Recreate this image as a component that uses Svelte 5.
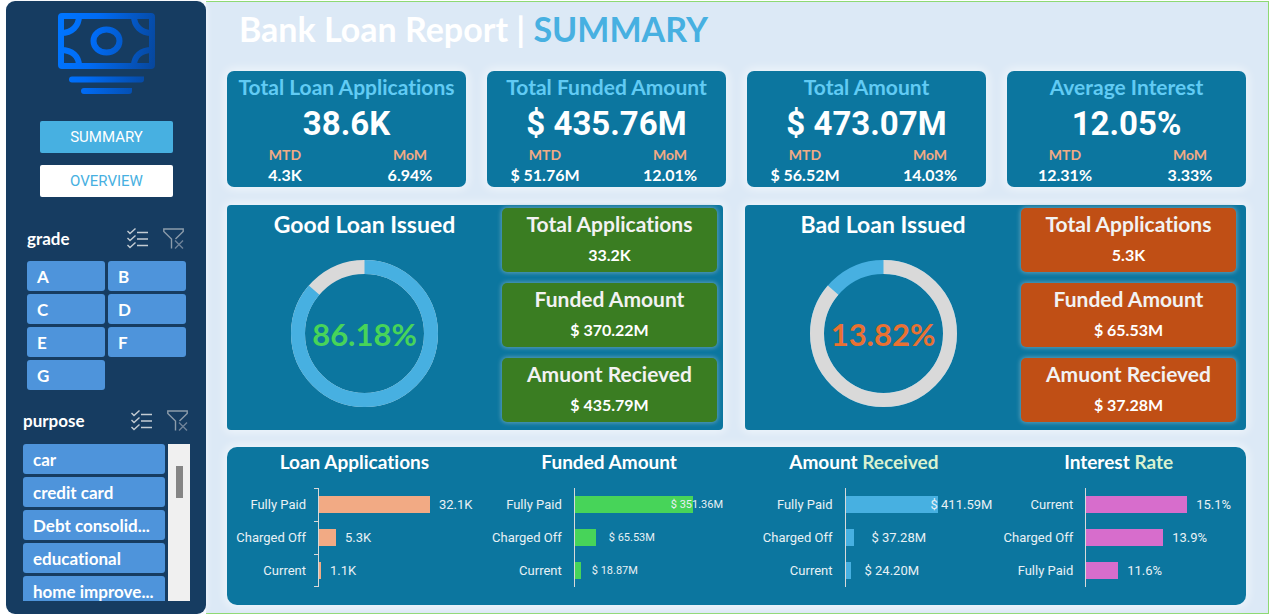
<script>
  const kpis = [
    { title: 'Total Loan Applications', value: '38.6K', mtd: '4.3K', mom: '6.94%' },
    { title: 'Total Funded Amount', value: '$ 435.76M', mtd: '$ 51.76M', mom: '12.01%' },
    { title: 'Total Amount', value: '$ 473.07M', mtd: '$ 56.52M', mom: '14.03%' },
    { title: 'Average Interest', value: '12.05%', mtd: '12.31%', mom: '3.33%' }
  ];

  const loans = [
    {
      kind: 'good', title: 'Good Loan Issued', share: '86.18%', main: '#47b0e1', rest: '#d9d9d9',
      stats: [['Total Applications', '33.2K'], ['Funded Amount', '$ 370.22M'], ['Amuont Recieved', '$ 435.79M']]
    },
    {
      kind: 'bad', title: 'Bad Loan Issued', share: '13.82%', main: '#d9d9d9', rest: '#47b0e1',
      stats: [['Total Applications', '5.3K'], ['Funded Amount', '$ 65.53M'], ['Amuont Recieved', '$ 37.28M']]
    }
  ];

  // bar: bar length, gap: distance from the bar's end to its value
  const charts = [
    {
      title: 'Loan', tail: 'Applications', color: '#f2aa84', axis: 91, ticks: true,
      rows: [
        { name: 'Fully Paid', text: '32.1K', bar: 111, gap: 9 },
        { name: 'Charged Off', text: '5.3K', bar: 17, gap: 9 },
        { name: 'Current', text: '1.1K', bar: 2, gap: 9 }
      ]
    },
    {
      title: 'Funded', tail: 'Amount', color: '#47d459', axis: 92, small: true,
      rows: [
        { name: 'Fully Paid', text: '$ 351.36M', bar: 118, gap: -22 },
        { name: 'Charged Off', text: '$ 65.53M', bar: 21, gap: 13 },
        { name: 'Current', text: '$ 18.87M', bar: 6, gap: 11 }
      ]
    },
    {
      title: 'Amount', tail: 'Received', color: '#47b0e1', axis: 108, tint: true,
      rows: [
        { name: 'Fully Paid', text: '$ 411.59M', bar: 92, gap: -7 },
        { name: 'Charged Off', text: '$ 37.28M', bar: 8, gap: 18 },
        { name: 'Current', text: '$ 24.20M', bar: 5, gap: 14 }
      ]
    },
    {
      title: 'Interest', tail: 'Rate', color: '#d76dcc', axis: 94, tint: true,
      rows: [
        { name: 'Current', text: '15.1%', bar: 101, gap: 9 },
        { name: 'Charged Off', text: '13.9%', bar: 77, gap: 9 },
        { name: 'Fully Paid', text: '11.6%', bar: 32, gap: 9 }
      ]
    }
  ];

  const grades = ['A', 'B', 'C', 'D', 'E', 'F', 'G'];
  const purposes = ['car', 'credit card', 'Debt consolid...', 'educational', 'home improve...'];

  const turn = 2 * Math.PI * 66.5;
</script>

{#snippet tools(name)}
  <div class="tools">
    <button type="button" aria-label="Multi-select {name}">
      <svg width="21" height="21" viewBox="0 0 21 21" fill="none" stroke="#c4ccd3" stroke-width="1.4">
        <path d="M.5 3 3 5.500l5.500-5M.5 10 3 12.500l5.500-5M.5 17 3 19.500l5.500-5" />
        <path d="M10 4.500h11M10 11h11M10 17.500h11" />
      </svg>
    </button>
    <button type="button" aria-label="Clear {name} filter">
      <svg width="21" height="21" viewBox="0 0 21 21" fill="none" stroke="#8c9cab" stroke-width="1.4">
        <path d="M8.500 20.500v-9.500L.8 3.500V1h19.400v2.500l-7.700 7.500" />
        <path d="M12 12.500l8 8M20 12.500l-8 8" stroke="#70849a" />
      </svg>
    </button>
  </div>
{/snippet}

<div class="page">
  <aside>
    <svg class="logo" width="98" height="82" viewBox="0 0 98 82" fill="none" stroke="url(#ink)" stroke-width="6" role="img" aria-label="Bank notes">
      <defs>
        <linearGradient id="ink" gradientUnits="userSpaceOnUse" x1="0" y1="30" x2="98" y2="50">
          <stop offset="0" stop-color="#0075ff" />
          <stop offset=".35" stop-color="#006bf5" />
          <stop offset="1" stop-color="#07479d" />
        </linearGradient>
      </defs>
      <rect x="4" y="3" width="91" height="50" rx="1" />
      <path d="M22 3c0 10-7 17-18 17M77 3c0 10 7 17 18 17M22 53c0-10-7-16-18-16M77 53c0-10 7-16 18-16" />
      <ellipse cx="49.5" cy="28" rx="13" ry="11.5" />
      <path d="M15 66.500h69v.1M27 78h45v.1" stroke-linecap="round" />
    </svg>

    <nav>
      <button type="button" class="active">SUMMARY</button>
      <button type="button">OVERVIEW</button>
    </nav>

    <section class="slicer grade">
      <header><h2>grade</h2>{@render tools('grade')}</header>
      <div class="grades">
        {#each grades as g}<button type="button" class="item">{g}</button>{/each}
      </div>
    </section>

    <section class="slicer purpose">
      <header><h2>purpose</h2>{@render tools('purpose')}</header>
      <div class="scroller">
        <div class="list">
          {#each purposes as p}<button type="button" class="item">{p}</button>{/each}
        </div>
        <div class="track"><div class="thumb"></div></div>
      </div>
    </section>
  </aside>

  <main>
    <h1>Bank Loan Report | <span>SUMMARY</span></h1>

    <section class="kpis">
      {#each kpis as k}
        <article class="kpi">
          <h2>{k.title}</h2>
          <strong>{k.value}</strong>
          <dl>
            <div><dt>MTD</dt><dd>{k.mtd}</dd></div>
            <div><dt>MoM</dt><dd>{k.mom}</dd></div>
          </dl>
        </article>
      {/each}
    </section>

    <section class="loans">
      {#each loans as l}
        <article class="loan {l.kind}">
          <div class="share">
            <h2>{l.title}</h2>
            <div class="donut">
              <svg width="147" height="147" viewBox="0 0 147 147" fill="none" stroke-width="14" aria-hidden="true">
                <circle cx="73.5" cy="73.5" r="66.5" stroke={l.rest} />
                <circle cx="73.5" cy="73.5" r="66.5" stroke={l.main} stroke-dasharray="{turn * 0.8618} {turn}" transform="rotate(-90 73.5 73.5)" />
              </svg>
              <span>{l.share}</span>
            </div>
          </div>
          <div class="stats">
            {#each l.stats as [name, value]}
              <div class="stat"><h3>{name}</h3><p>{value}</p></div>
            {/each}
          </div>
        </article>
      {/each}
    </section>

    <section class="charts">
      {#each charts as c}
        <article class="chart" class:small={c.small} class:ticks={c.ticks}>
          <h2>{c.title} <span class:tint={c.tint}>{c.tail}</span></h2>
          <ul>
            {#each c.rows as r}
              <li>
                <span class="name" style="width: {c.axis}px">{r.name}</span>
                <span class="plot">
                  <span class="bar" style="width: {r.bar}px; background: {c.color}"></span>
                  <span class="value" style="margin-left: {r.gap}px">{r.text}</span>
                </span>
              </li>
            {/each}
          </ul>
        </article>
      {/each}
    </section>
  </main>
</div>

<style>
  :global(body) { margin: 0; background: #fff; }
  .page {
    display: flex;
    box-sizing: border-box;
    min-height: 100vh;
    margin: 0 2px 0 6px;
    padding-top: 1px;
    font-family: Lato, "Liberation Sans", sans-serif;
    font-variant-ligatures: none;
    color: #fff;
  }
  h1, h2, h3, p, dl, dd, ul { margin: 0; padding: 0; }
  button { border: 0; padding: 0; font: inherit; color: inherit; cursor: pointer; }

  aside {
    flex: none;
    box-sizing: border-box;
    width: 200px;
    padding-top: 12px;
    background: #163c61;
    border-radius: 9px;
    box-shadow: 2px 0 4px #eef3fb;
    z-index: 1;
  }
  .logo { display: block; margin: 0 auto; }
  nav { display: grid; gap: 12px; margin: 26px 33px 0 34px; }
  nav button {
    height: 32px;
    border-radius: 2px;
    background: #fff;
    color: #47b0e1;
    font: 15px Roboto, sans-serif;
  }
  nav .active { background: #47b0e1; color: #fff; }

  .slicer header { display: flex; justify-content: space-between; align-items: center; height: 24px; }
  .slicer h2 { padding-top: 2px; font-size: 17px; line-height: 24px; }
  .tools { display: flex; gap: 15px; padding-right: 2px; }
  .tools button { background: none; height: 21px; }
  .tools svg { display: block; }
  .grade { margin: 29px 20px 0 21px; }
  .purpose { margin: 18px 16px 0 17px; }
  .grades { display: grid; grid-template-columns: 1fr 1fr; gap: 3px; margin-top: 11px; }
  .item {
    height: 30px;
    flex: none;
    padding: 0 10px;
    border-radius: 3px;
    background: #4e94db;
    text-align: left;
    font-size: 17px;
    font-weight: 700;
    font-variant-ligatures: none;
    white-space: nowrap;
  }
  .scroller { display: flex; gap: 3px; margin-top: 12px; }
  .list { flex: 1; display: flex; flex-direction: column; gap: 3px; max-height: 157px; overflow: hidden; }
  .track { width: 22px; padding-top: 22px; box-sizing: border-box; background: #f0f0f0; }
  .thumb { width: 7px; height: 32px; margin: 0 auto; background: #858585; }

  main {
    flex: 1;
    min-width: 0;
    padding: 0 22px 6px 21px;
    background: #dce9f6;
    border: 1px solid #8ed973;
    border-left: 0;
  }
  h1 { padding-left: 12px; font-size: 34px; line-height: 54px; margin-bottom: 15px; }
  h1 span { color: #47b0e1; }

  .kpis { display: grid; grid-template-columns: repeat(4, minmax(0, 1fr)); gap: 21px; text-align: center; }
  .kpi, .loan, .charts { background: #0c769f; box-shadow: 0 0 8px 3px rgb(255 255 255 / 50%); }
  .kpi { padding-bottom: 2px; border-radius: 7px; }
  .kpi h2 { font-size: 21px; line-height: 32px; color: #61cbf4; white-space: nowrap; }
  .kpi strong { display: block; font: 700 33px/42px Roboto, sans-serif; }
  .kpi dl { display: flex; justify-content: space-between; padding: 0 8px 0 10px; font-weight: 700; line-height: 20px; }
  .kpi dl div { width: 96px; }
  dt { font-size: 14px; color: #f2aa84; }
  dd { font-size: 16px; }

  .loans { display: grid; grid-template-columns: 496fr 501fr; gap: 22px; margin-top: 18px; }
  .loan { display: flex; padding: 3px 6px 8px 0; border-radius: 4px; text-align: center; }
  .loan.bad { padding-right: 10px; }
  .share { flex: 1; }
  .share h2 { font-size: 23px; line-height: 32px; margin-bottom: 20px; }
  .donut { display: grid; justify-items: center; align-items: center; }
  .donut svg, .donut span { grid-area: 1 / 1; }
  .donut span { font-size: 31px; font-weight: 700; color: #47d459; }
  .bad .donut span { color: #e97132; }
  .stats { display: grid; gap: 11px; width: 215px; }
  .stat { padding-bottom: 2px; border-radius: 5px; background: #3a7d22; box-shadow: 0 0 4px 1px #5d9fb8; }
  .bad .stat { background: #c04f15; }
  .stat h3 { font-size: 21px; line-height: 32px; color: #f2f2f2; }
  .stat p { font-size: 16px; line-height: 30px; font-weight: 700; }

  .charts { display: grid; grid-template-columns: repeat(4, minmax(0, 1fr)); margin-top: 17px; padding-bottom: 18px; border-radius: 10px; }
  .chart h2 { margin-bottom: 11px; font-size: 19px; line-height: 30px; text-align: center; }
  .tint { color: #d9f2d0; }
  .chart li { display: flex; height: 33px; font: 13px/33px Roboto, sans-serif; color: #e8f1f5; white-space: nowrap; }
  .name { position: relative; flex: none; box-sizing: border-box; padding-right: 12px; text-align: right; }
  .ticks .name::after { content: ""; position: absolute; top: 0; right: 0; bottom: 0; width: 4px; border-top: 1px solid #d9d9d9; }
  .ticks li:last-child .name::after { border-bottom: 1px solid #d9d9d9; }
  .plot { display: flex; align-items: center; flex: 1; min-width: 0; border-left: 1px solid #d9d9d9; }
  .bar { flex: none; height: 17px; }
  .small .value { font-size: 11px; }
</style>
